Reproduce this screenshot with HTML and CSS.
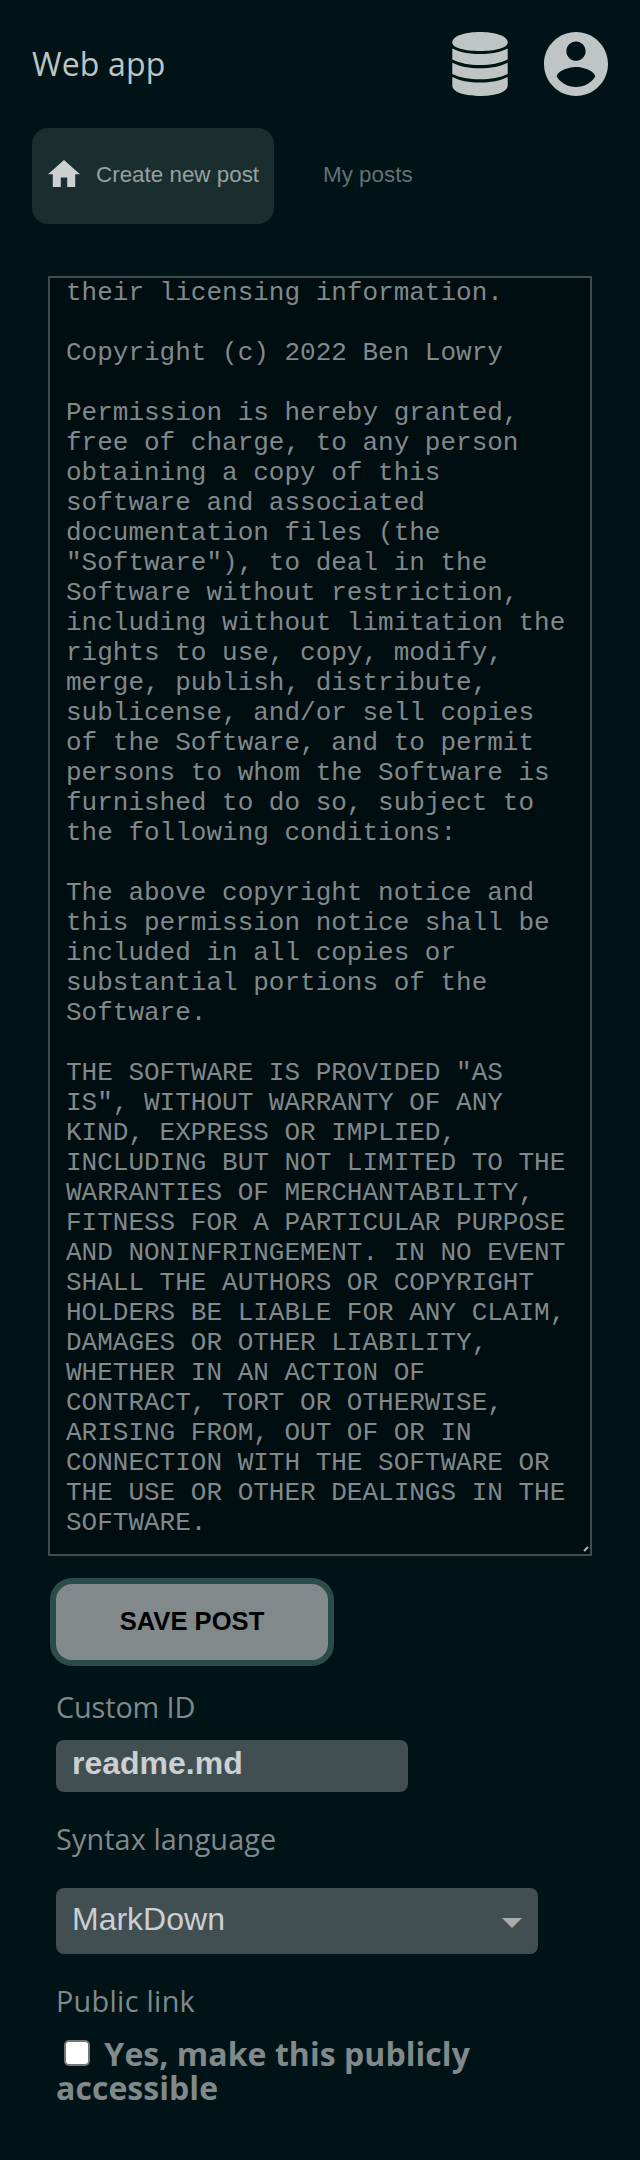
FILE: index.html
```html
<!DOCTYPE html>
<html lang="en">
<head>
<meta charset="utf-8">
<title>Web app</title>
<link rel="stylesheet" href="styles.css">
</head>
<body>
<header class="header">
  <h1 class="title">Web app</h1>
  <div class="header-icons">
    <svg class="icon" viewBox="0 0 64 64" fill="currentColor"><path d="M4.300 10.500C4.300 3.500 18 0 32 0s27.700 3.500 27.700 10.500C59.700 16 47 19 32 19S4.300 16 4.300 10.500Z"/><path d="M4.300 16.500C12 20.300 21 22 32 22s20-1.700 27.700-5.500V27.500C52 31.200 43 33 32 33s-20-1.800-27.700-5.500Z"/><path d="M4.300 30.700C12 34.500 21 36.300 32 36.300s20-1.800 27.700-5.600V42C52 45.700 43 47.300 32 47.300S12 45.700 4.300 42Z"/><path d="M4.300 45C12 48.800 21 50.500 32 50.500s20-1.700 27.700-5.500V53.500C59.700 60.500 46 64 32 64S4.300 60.500 4.300 53.500Z"/></svg>
    <svg class="icon" viewBox="2 2 20 20" fill="currentColor"><path d="M12 2C6.480 2 2 6.480 2 12s4.480 10 10 10 10-4.480 10-10S17.520 2 12 2zm0 3c1.660 0 3 1.340 3 3s-1.340 3-3 3-3-1.340-3-3 1.340-3 3-3zm0 14.200c-2.500 0-4.710-1.280-6-3.220.03-1.990 4-3.080 6-3.080 1.990 0 5.970 1.090 6 3.080-1.290 1.940-3.500 3.220-6 3.220z"/></svg>
  </div>
</header>
<nav class="nav">
  <a class="tab tab-active"><svg class="home" viewBox="2 3 20 17" preserveAspectRatio="none" fill="currentColor"><path d="M10 20v-6h4v6h5v-8h3L12 3 2 12h3v8z"/></svg>Create new post</a>
  <a class="tab">My posts</a>
</nav>
<form class="form">
<div class="editor-wrap">
<textarea class="editor" spellcheck="false">their licensing information.

Copyright (c) 2022 Ben Lowry

Permission is hereby granted, free of charge, to any person obtaining a copy of this software and associated documentation files (the "Software"), to deal in the Software without restriction, including without limitation the rights to use, copy, modify, merge, publish, distribute, sublicense, and/or sell copies of the Software, and to permit persons to whom the Software is furnished to do so, subject to the following conditions:

The above copyright notice and this permission notice shall be included in all copies or substantial portions of the Software.

THE SOFTWARE IS PROVIDED "AS IS", WITHOUT WARRANTY OF ANY KIND, EXPRESS OR IMPLIED, INCLUDING BUT NOT LIMITED TO THE WARRANTIES OF MERCHANTABILITY, FITNESS FOR A PARTICULAR PURPOSE AND NONINFRINGEMENT. IN NO EVENT SHALL THE AUTHORS OR COPYRIGHT HOLDERS BE LIABLE FOR ANY CLAIM, DAMAGES OR OTHER LIABILITY, WHETHER IN AN ACTION OF CONTRACT, TORT OR OTHERWISE, ARISING FROM, OUT OF OR IN CONNECTION WITH THE SOFTWARE OR THE USE OR OTHER DEALINGS IN THE SOFTWARE.</textarea>
<svg class="grip" viewBox="0 0 6 6"><path d="M1 5L5 1" stroke="#b4b8b8" stroke-width="2"/></svg>
</div>
  <div class="fields">
    <button class="save" type="button">SAVE POST</button>
    <label class="label" for="custom-id">Custom ID</label>
    <input class="text-input" id="custom-id" type="text" value="readme.md">
    <div class="label label-syntax">Syntax language</div>
    <div class="select">MarkDown<svg class="caret" viewBox="0 0 20 10"><path d="M0 0h20L10 10z" fill="#aaa"/></svg></div>
    <div class="label label-public">Public link</div>
    <label class="public"><input class="check" type="checkbox"> Yes, make this publicly accessible</label>
  </div>
</form>
</body>
</html>
```

FILE: styles.css
```css
* { box-sizing: border-box; }
body {
  margin: 0;
  min-height: 2160px;
  background: #001317;
  color: #81898b;
  font-family: "Open Sans", sans-serif;
}
.header {
  display: flex;
  justify-content: space-between;
  align-items: center;
  height: 128px;
  padding: 0 32px;
}
.title { margin: 0; font-size: 32px; font-weight: 400; line-height: 44px; letter-spacing: 0.15px; color: #bfc4c5; }
.header-icons { display: flex; gap: 32px; color: #bfc4c5; }
.icon { display: block; width: 64px; height: 64px; }
.nav {
  display: flex;
  padding: 0 32px;
  height: 96px;
  font: 22.4px/32px "Liberation Sans", Arial, sans-serif;
}
.tab { display: flex; align-items: center; padding: 0 0 3px 49px; color: #667174; }
.tab-active {
  width: 242px;
  padding-left: 16px;
  border-radius: 16px;
  background: #1a2d2f;
  color: #98a1a2;
  white-space: nowrap;
}
.home { width: 32px; height: 27px; margin: -3px 16px 0 0; color: #ccd0d1; flex: none; }
.form { padding: 52px 48px 0; }
.editor-wrap { position: relative; width: 544px; }
.editor {
  display: block;
  width: 544px;
  height: 1280px;
  margin: 0;
  padding: 0 16px;
  border: 2px solid #404b4e;
  border-radius: 0;
  outline: 0;
  overflow: hidden;
  resize: none;
  background: #000d11;
  color: #81898b;
  font: 26px/30px "Liberation Mono", monospace;
}
.grip { position: absolute; right: 3px; bottom: 4px; width: 6px; height: 6px; }
.fields { display: flex; flex-direction: column; align-items: flex-start; padding: 28px 8px 0; }
.save {
  width: 272px;
  height: 76px;
  padding: 0 0 1px;
  border: 0;
  border-radius: 16px;
  box-shadow: 0 0 0 6px #2c4c4c;
  background: #81898b;
  color: #000;
  font: bold 25.6px "Liberation Sans", Arial, sans-serif;
}
.label { margin-top: 27px; font-size: 28.8px; line-height: 40px; letter-spacing: -0.1px; }
.text-input {
  width: 352px;
  height: 52px;
  margin-top: 13px;
  padding: 0 16px 5px;
  border: 0;
  border-radius: 8px;
  background: #414f53;
  color: #ccd0d1;
  font: bold 32px "Liberation Sans", Arial, sans-serif;
}
.label-syntax { margin-top: 27px; letter-spacing: 0.1px; }
.select {
  display: flex;
  justify-content: space-between;
  align-items: center;
  width: 482px;
  height: 66px;
  margin-top: 29px;
  padding: 0 16px 4px;
  border-radius: 8px;
  background: #414f53;
  color: #ccd0d1;
  font: 32px/36px "Liberation Sans", Arial, sans-serif;
}
.caret { width: 20px; height: 10px; margin-top: 7px; }
.label-public { margin-top: 27px; letter-spacing: 0.3px; }
.public { margin-top: 16px; font-size: 32px; font-weight: 700; line-height: 34px; letter-spacing: 0.05px; width: 480px; }
.check {
  appearance: none;
  width: 26px;
  height: 26px;
  margin: 0 6px 0 8px;
  border: 2px solid #767676;
  border-radius: 5px;
  background: #fff;
}
```
